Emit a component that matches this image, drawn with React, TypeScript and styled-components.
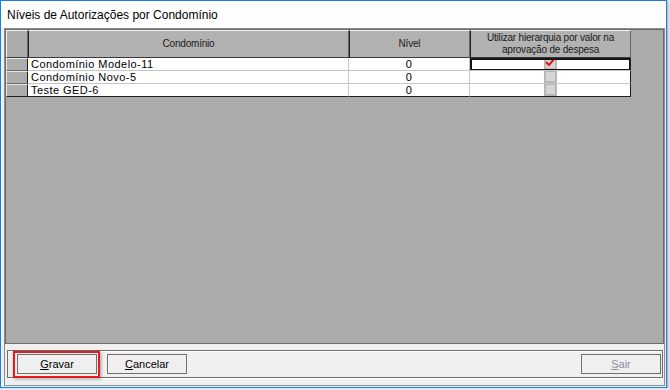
import React from "react";
import styled, { createGlobalStyle } from "styled-components";

const GlobalStyle = createGlobalStyle`
  html, body {
    margin: 0;
    padding: 0;
    background: #dfe8f1;
  }
  body {
    font-family: "Liberation Sans", Arial, sans-serif;
  }
`;

const Window = styled.div`
  box-sizing: border-box;
  width: 667px;
  height: 388px;
  border: 1px solid #1a80d6;
  background: #f0f0f0;
  display: flex;
  flex-direction: column;
  box-shadow: 1px 1px 2px rgba(0, 0, 0, 0.25);
`;

const TitleBar = styled.div`
  height: 27px;
  background: #ffffff;
  display: flex;
  align-items: center;
  padding-left: 6px;
  font-size: 12px;
  color: #000;
`;

const Client = styled.div`
  flex: 1;
  display: flex;
  padding: 0 1px 1px 3px;
`;

const Panel = styled.div`
  flex: 1;
  display: flex;
  flex-direction: column;
  border: 1px solid #8c8c8c;
`;

const GridArea = styled.div`
  box-sizing: border-box;
  height: 315px;
  background: #ababab;
  border: 1px solid #6b6b6b;
`;

const Table = styled.div`
  display: grid;
  grid-template-columns: 22px 321px 121px 161px;
  font-size: 11px;
  letter-spacing: 0.45px;
  color: #000;
`;

const HeaderCell = styled.div<{ $corner?: boolean }>`
  box-sizing: border-box;
  height: 28px;
  background: ${(p) => (p.$corner ? "#acacac" : "#b2b2b2")};
  border-top: 1px solid #f4f4f4;
  border-left: 1px solid ${(p) => (p.$corner ? "#f4f4f4" : "#1e1e1e")};
  border-right: 1px solid #6a6a6a;
  border-bottom: 1px solid #3a3a3a;
  display: flex;
  align-items: center;
  justify-content: center;
  text-align: center;
  font-size: 10px;
  letter-spacing: -0.2px;
  line-height: 12px;
  color: #1a1a1a;
`;

const RowHead = styled.div<{ $last?: boolean }>`
  box-sizing: border-box;
  height: 13px;
  background: #acacac;
  border-top: 1px solid #e8e8e8;
  border-left: 1px solid #e8e8e8;
  border-right: 1px solid #1e1e1e;
  border-bottom: 1px solid ${(p) => (p.$last ? "#1e1e1e" : "#6a6a6a")};
`;

const Cell = styled.div<{ $align?: "left" | "center"; $last?: boolean; $edge?: boolean }>`
  box-sizing: border-box;
  height: 13px;
  background: #fff;
  border-bottom: 1px solid ${(p) => (p.$last ? "#1e1e1e" : "#c6c6c6")};
  border-right: 1px solid ${(p) => (p.$edge ? "#1e1e1e" : "#c6c6c6")};
  padding-left: ${(p) => (p.$align === "center" ? "0" : "3px")};
  line-height: 12px;
  white-space: nowrap;
  overflow: hidden;
  display: flex;
  justify-content: ${(p) => (p.$align === "center" ? "center" : "flex-start")};
  align-items: center;
  position: relative;
`;

const Focus = styled.div`
  position: absolute;
  inset: 0 -1px -1px 0;
  border: 2px solid #141414;
  pointer-events: none;
`;

const CheckBox = styled.div`
  box-sizing: border-box;
  width: 13px;
  height: 12px;
  background: #b8b8b8;
  padding: 1px 2px;
  position: relative;
  &::before {
    content: "";
    display: block;
    width: 9px;
    height: 9px;
    background: #d6d6d6;
  }
`;

const Check = styled.svg`
  position: absolute;
  left: 1px;
  top: -1px;
`;

const BottomBar = styled.div`
  padding: 6px 1px 6px 2px;
`;

const GroupBox = styled.div`
  box-sizing: border-box;
  height: 28px;
  border: 1px solid #6e6e6e;
  box-shadow: 0 1px 0 #ffffff, inset 0 1px 0 #ffffff;
  display: flex;
  align-items: center;
  padding: 0 1px 0 9px;
  gap: 10px;
`;

const Button = styled.div<{ $disabled?: boolean; $highlight?: boolean }>`
  box-sizing: border-box;
  width: 80px;
  height: 20px;
  border: 1px solid #6f6f6f;
  background: #efefef;
  font-size: 11px;
  color: ${(p) => (p.$disabled ? "#8e8ea0" : "#000")};
  display: flex;
  align-items: center;
  justify-content: center;
  position: relative;
  u {
    text-decoration: underline;
    text-underline-offset: 1px;
  }
  ${(p) =>
    p.$highlight &&
    `
    &::after {
      content: "";
      position: absolute;
      left: -5px;
      top: -4px;
      right: -4px;
      bottom: -5px;
      border: 2px solid #e51b1b;
      box-shadow: 1px 1px 3px rgba(0,0,0,0.35);
    }
  `}
`;

const Spacer = styled.div`
  flex: 1;
`;

const rows = [
  { name: "Condomínio Modelo-11", nivel: 0, checked: true },
  { name: "Condomínio Novo-5", nivel: 0, checked: false },
  { name: "Teste GED-6", nivel: 0, checked: false },
];

export default function App() {
  return (
    <>
      <GlobalStyle />
      <Window>
        <TitleBar>Níveis de Autorizações por Condomínio</TitleBar>
        <Client>
          <Panel>
            <GridArea>
              <Table>
                <HeaderCell $corner />
                <HeaderCell>Condomínio</HeaderCell>
                <HeaderCell>Nível</HeaderCell>
                <HeaderCell>
                  Utilizar hierarquia por valor na
                  <br />
                  aprovação de despesa
                </HeaderCell>
                {rows.map((r, i) => {
                  const last = i === rows.length - 1;
                  return (
                    <React.Fragment key={r.name}>
                      <RowHead $last={last} />
                      <Cell $last={last}>{r.name}</Cell>
                      <Cell $align="center" $last={last}>
                        {r.nivel}
                      </Cell>
                      <Cell $align="center" $last={last} $edge>
                        <CheckBox>
                          {r.checked && (
                            <Check width="12" height="10" viewBox="0 0 12 10">
                              <path d="M1 5 L4 8 L10 1" fill="none" stroke="#e8141c" strokeWidth="2" />
                            </Check>
                          )}
                        </CheckBox>
                        {i === 0 && <Focus />}
                      </Cell>
                    </React.Fragment>
                  );
                })}
              </Table>
            </GridArea>
            <BottomBar>
              <GroupBox>
                <Button $highlight>
                  <span>
                    <u>G</u>ravar
                  </span>
                </Button>
                <Button>
                  <span>
                    <u>C</u>ancelar
                  </span>
                </Button>
                <Spacer />
                <Button $disabled>
                  <span>
                    <u>S</u>air
                  </span>
                </Button>
              </GroupBox>
            </BottomBar>
          </Panel>
        </Client>
      </Window>
    </>
  );
}
